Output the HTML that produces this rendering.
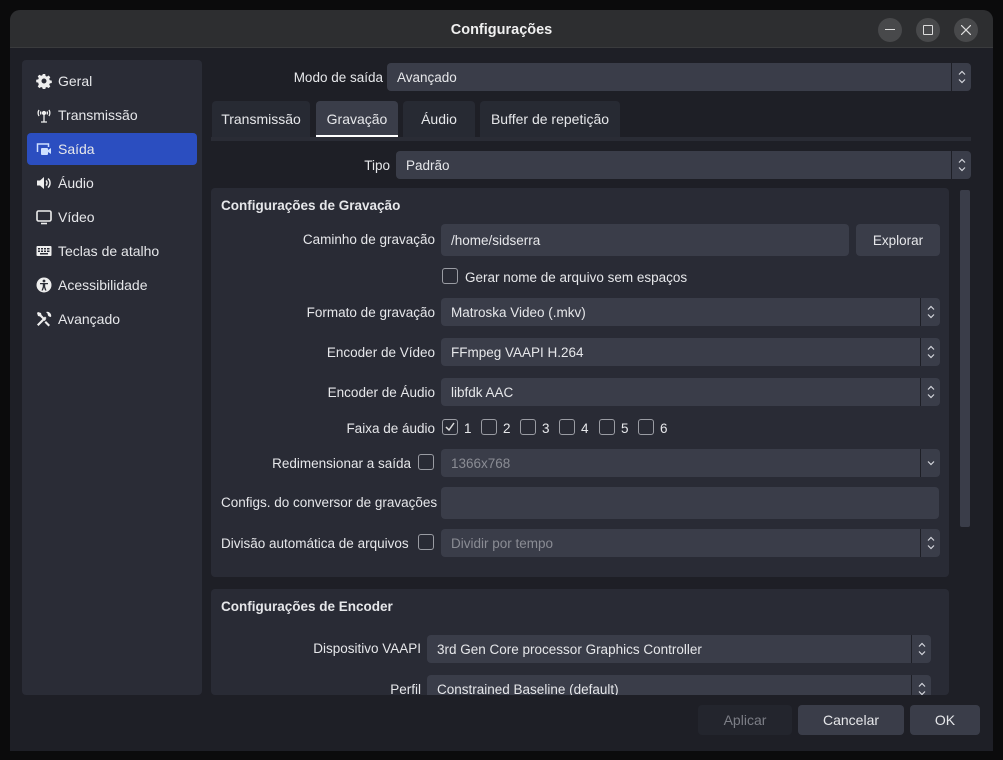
<!DOCTYPE html><html><head><meta charset="utf-8"><style>
*{margin:0;padding:0;box-sizing:border-box}
body{width:1003px;height:760px;background:#0b0b0c;font-family:"Liberation Sans","DejaVu Sans",sans-serif;font-size:13.5px;color:#e6e7ea;position:relative;overflow:hidden}
.a{position:absolute}
.win{left:10px;top:10px;width:983px;height:741px;background:#1e1f26;border-radius:10px 10px 0 0;overflow:hidden}
.tb{left:0;top:0;width:983px;height:38px;background:#2d2e30;border-bottom:1px solid #3a3b3d}
.title{left:0;top:12px;width:983px;text-align:center;font-weight:bold;font-size:14.5px;color:#f0f0f0}
.wb{width:24px;height:24px;border-radius:12px;background:#48494b;top:8px}
.side{left:12px;top:50px;width:180px;height:635px;background:#2a2c36;border-radius:4px}
.si{left:5px;height:32px;width:170px;border-radius:4px;padding-left:31px;line-height:33px;font-size:14px}
.si svg{position:absolute;left:9px;top:8px}
.sel{background:#2b4ec0}
.lbl{text-align:right;white-space:nowrap}
.inp{background:#3a3d49;border-radius:4px;padding-left:10px;line-height:29px;height:28px;white-space:nowrap}
.spin{position:absolute;right:0;top:0;width:20px;height:28px;border-left:1px solid #1e1f26}
.spin svg{position:absolute;left:5px;top:7px}
.grp{background:#292b35;border-radius:4px}
.cb{width:16px;height:16px;border:1.5px solid #9a9ca3;border-radius:3px}
.tab{top:91px;height:36px;background:#272a33;border-radius:4px 4px 0 0;text-align:center;line-height:37px;font-size:14px}
.btn{top:695px;height:30px;border-radius:4px;background:#3a3d49;text-align:center;line-height:31px;font-size:14px}
.t{margin-top:1px}
</style></head><body>
<svg width="0" height="0" style="position:absolute"><defs><g id="ud"><path d="M2 4.5l3-3 3 3M2 9.5l3 3 3-3" fill="none" stroke="#d4d6dc" stroke-width="1.2"/></g><g id="dn"><path d="M2 5.5l3 3 3-3" fill="none" stroke="#d4d6dc" stroke-width="1.2"/></g></defs></svg>
<div class="a win">
 <div class="a tb"></div>
 <div class="a title">Configurações</div>
 <div class="a wb" style="left:868px"><div class="a" style="left:7px;top:11px;width:10px;height:1.2px;background:#ddd"></div></div>
 <div class="a wb" style="left:906px"><div class="a" style="left:7px;top:7px;width:10px;height:10px;border:1.2px solid #ddd;border-radius:1px"></div></div>
 <div class="a wb" style="left:944px"><svg class="a" style="left:7px;top:7px" width="10" height="10"><path d="M0 0l10 10M10 0L0 10" stroke="#ddd" stroke-width="1.2"/></svg></div>

 <div class="a side">
  <div class="a si" style="top:5px"><svg width="16" height="16" viewBox="0 0 16 16"><path fill="#eee" d="M6.8 1h2.4l.4 2 1.3.6 1.7-1.1 1.7 1.7-1.1 1.7.6 1.3 2 .4v2.4l-2 .4-.6 1.3 1.1 1.7-1.7 1.7-1.7-1.1-1.3.6-.4 2H6.8l-.4-2-1.3-.6-1.7 1.1-1.7-1.7 1.1-1.7L2.2 9.6l-2-.4V6.8l2-.4.6-1.3-1.1-1.7 1.7-1.7 1.7 1.1 1.3-.6zM8 5.5a2.5 2.5 0 100 5 2.5 2.5 0 000-5z"/></svg>Geral</div>
  <div class="a si" style="top:39px"><svg width="16" height="16" viewBox="0 0 16 16" fill="none" stroke="#eee" stroke-width="1.3"><path d="M8 8v7M5 15h6M3 3a6 6 0 000 6M13 3a6 6 0 010 6M5 4.5a3 3 0 000 3M11 4.5a3 3 0 010 3"/><circle cx="8" cy="6" r="1.5" fill="#eee"/></svg>Transmissão</div>
  <div class="a si sel" style="top:73px"><svg width="16" height="16" viewBox="0 0 16 16"><path fill="none" stroke="#cfe0ff" stroke-width="1.5" d="M1.5 11V3h11v3"/><rect x="5" y="7" width="7" height="7" rx="1" fill="#cfe0ff"/><path d="M12 9l3-2v6l-3-2z" fill="#cfe0ff"/></svg>Saída</div>
  <div class="a si" style="top:107px"><svg width="16" height="16" viewBox="0 0 16 16"><path fill="#eee" d="M1 5.5h3l4-3.5v12L4 10.5H1z"/><path fill="none" stroke="#eee" stroke-width="1.5" d="M10 5.5a3.5 3.5 0 010 5M12 3.5a6 6 0 010 9"/></svg>Áudio</div>
  <div class="a si" style="top:141px"><svg width="16" height="16" viewBox="0 0 16 16" fill="none" stroke="#eee" stroke-width="1.6"><rect x="1" y="2" width="14" height="10" rx="1.5"/><path d="M5 14.5h6"/></svg>Vídeo</div>
  <div class="a si" style="top:175px"><svg width="16" height="16" viewBox="0 0 16 16"><rect x="0.5" y="3" width="15" height="10" rx="1" fill="#eee"/><g fill="#2a2c36"><rect x="2" y="5" width="2" height="1.5"/><rect x="5" y="5" width="2" height="1.5"/><rect x="8" y="5" width="2" height="1.5"/><rect x="11" y="5" width="2.5" height="1.5"/><rect x="2" y="7.5" width="2" height="1.5"/><rect x="5" y="7.5" width="2" height="1.5"/><rect x="8" y="7.5" width="2" height="1.5"/><rect x="11" y="7.5" width="2.5" height="1.5"/><rect x="4" y="10" width="8" height="1.5"/></g></svg>Teclas de atalho</div>
  <div class="a si" style="top:209px"><svg width="16" height="16" viewBox="0 0 16 16"><circle cx="8" cy="8" r="7.5" fill="#eee"/><circle cx="8" cy="4" r="1.4" fill="#2a2c36"/><path d="M4 6h8v1.3H9.2v2.5l1.3 3.7H9.1L8 10.5l-1.1 3H5.5l1.3-3.7V7.3H4z" fill="#2a2c36"/></svg>Acessibilidade</div>
  <div class="a si" style="top:243px"><svg width="16" height="16" viewBox="0 0 16 16" fill="#eee"><path d="M1 13.5L9 5.5l1.5 1.5-8 8zM10 1a4 4 0 015 5l-2-.5-1-1-.5-2z"/><path d="M2 1l3 1 .5 2L10 8.5 8.5 10 4 5.5 2 5 1 2zM10 10l4 4-1.5 1.5-4-4z"/></svg>Avançado</div>
 </div>

 <div class="a lbl" style="left:190px;top:60px;width:183px">Modo de saída</div>
 <div class="a inp" style="left:377px;top:53px;width:584px">Avançado<div class="spin"><svg width="10" height="14"><use href="#ud"/></svg></div></div>

 <div class="a" style="left:201px;top:127px;width:760px;height:4px;background:#2a2c35"></div>
 <div class="a tab" style="left:202px;width:98px">Transmissão</div>
 <div class="a tab" style="left:306px;width:82px;background:#3a3d49">Gravação<div class="a" style="left:0;bottom:0;width:82px;height:2px;background:#fff"></div></div>
 <div class="a tab" style="left:393px;width:72px">Áudio</div>
 <div class="a tab" style="left:470px;width:140px">Buffer de repetição</div>

 <div class="a lbl" style="left:300px;top:148px;width:80px">Tipo</div>
 <div class="a inp" style="left:386px;top:141px;width:575px">Padrão<div class="spin"><svg width="10" height="14"><use href="#ud"/></svg></div></div>

 <div class="a" style="left:950px;top:180px;width:10px;height:337px;background:#3a3d49;border-radius:2px"></div>

 <div class="a grp" style="left:201px;top:178px;width:738px;height:389px"></div>
 <div class="a" style="left:211px;top:188px;font-weight:bold">Configurações de Gravação</div>
 <div class="a lbl" style="left:200px;top:222px;width:225px">Caminho de gravação</div>
 <div class="a inp" style="left:431px;top:214px;width:408px;height:32px;line-height:33px">/home/sidserra</div>
 <div class="a inp" style="left:846px;top:214px;width:84px;height:32px;line-height:33px;padding:0;text-align:center">Explorar</div>
 <div class="a cb" style="left:432px;top:258px"></div>
 <div class="a" style="left:455px;top:260px">Gerar nome de arquivo sem espaços</div>

 <div class="a lbl" style="left:200px;top:295px;width:225px">Formato de gravação</div>
 <div class="a inp" style="left:431px;top:288px;width:499px">Matroska Video (.mkv)<div class="spin"><svg width="10" height="14"><use href="#ud"/></svg></div></div>
 <div class="a lbl" style="left:200px;top:335px;width:225px">Encoder de Vídeo</div>
 <div class="a inp" style="left:431px;top:328px;width:499px">FFmpeg VAAPI H.264<div class="spin"><svg width="10" height="14"><use href="#ud"/></svg></div></div>
 <div class="a lbl" style="left:200px;top:375px;width:225px">Encoder de Áudio</div>
 <div class="a inp" style="left:431px;top:368px;width:499px">libfdk AAC<div class="spin"><svg width="10" height="14"><use href="#ud"/></svg></div></div>

 <div class="a lbl" style="left:200px;top:411px;width:225px">Faixa de áudio</div>
 <div class="a cb" style="left:432px;top:409px"><svg class="a" style="left:1px;top:1px" width="12" height="12" viewBox="0 0 12 12"><path d="M2 6l3 3 5-7" fill="none" stroke="#ddd" stroke-width="1.5"/></svg></div>
 <div class="a" style="left:454px;top:411px">1</div>
 <div class="a cb" style="left:471px;top:409px"></div><div class="a" style="left:493px;top:411px">2</div>
 <div class="a cb" style="left:510px;top:409px"></div><div class="a" style="left:532px;top:411px">3</div>
 <div class="a cb" style="left:549px;top:409px"></div><div class="a" style="left:571px;top:411px">4</div>
 <div class="a cb" style="left:589px;top:409px"></div><div class="a" style="left:611px;top:411px">5</div>
 <div class="a cb" style="left:628px;top:409px"></div><div class="a" style="left:650px;top:411px">6</div>

 <div class="a lbl" style="left:200px;top:446px;width:201px">Redimensionar a saída</div>
 <div class="a cb" style="left:408px;top:444px"></div>
 <div class="a inp" style="left:431px;top:439px;width:499px;color:#8a8c94">1366x768<div class="spin"><svg width="10" height="14"><use href="#dn"/></svg></div></div>
 <div class="a lbl" style="left:211px;top:485px">Configs. do conversor de gravações</div>
 <div class="a inp" style="left:431px;top:477px;width:498px;height:32px"></div>
 <div class="a lbl" style="left:211px;top:526px">Divisão automática de arquivos</div>
 <div class="a cb" style="left:408px;top:524px"></div>
 <div class="a inp" style="left:431px;top:519px;width:499px;color:#8a8c94">Dividir por tempo<div class="spin"><svg width="10" height="14"><use href="#ud"/></svg></div></div>

 <div class="a grp" style="left:201px;top:579px;width:738px;height:106px"></div>
 <div class="a" style="left:211px;top:589px;font-weight:bold">Configurações de Encoder</div>
 <div class="a lbl" style="left:200px;top:631px;width:211px">Dispositivo VAAPI</div>
 <div class="a inp" style="left:417px;top:625px;width:504px">3rd Gen Core processor Graphics Controller<div class="spin"><svg width="10" height="14"><use href="#ud"/></svg></div></div>
 <div class="a lbl" style="left:200px;top:672px;width:211px">Perfil</div>
 <div class="a" style="left:417px;top:665px;width:504px;height:20px;overflow:hidden"><div class="inp" style="position:relative">Constrained Baseline (default)<div class="spin"><svg width="10" height="14"><use href="#ud"/></svg></div></div></div>

 <div class="a btn" style="left:688px;width:94px;background:#23252d;color:#7c7e86">Aplicar</div>
 <div class="a btn" style="left:788px;width:106px">Cancelar</div>
 <div class="a btn" style="left:900px;width:70px">OK</div>
</div>
</body></html>
